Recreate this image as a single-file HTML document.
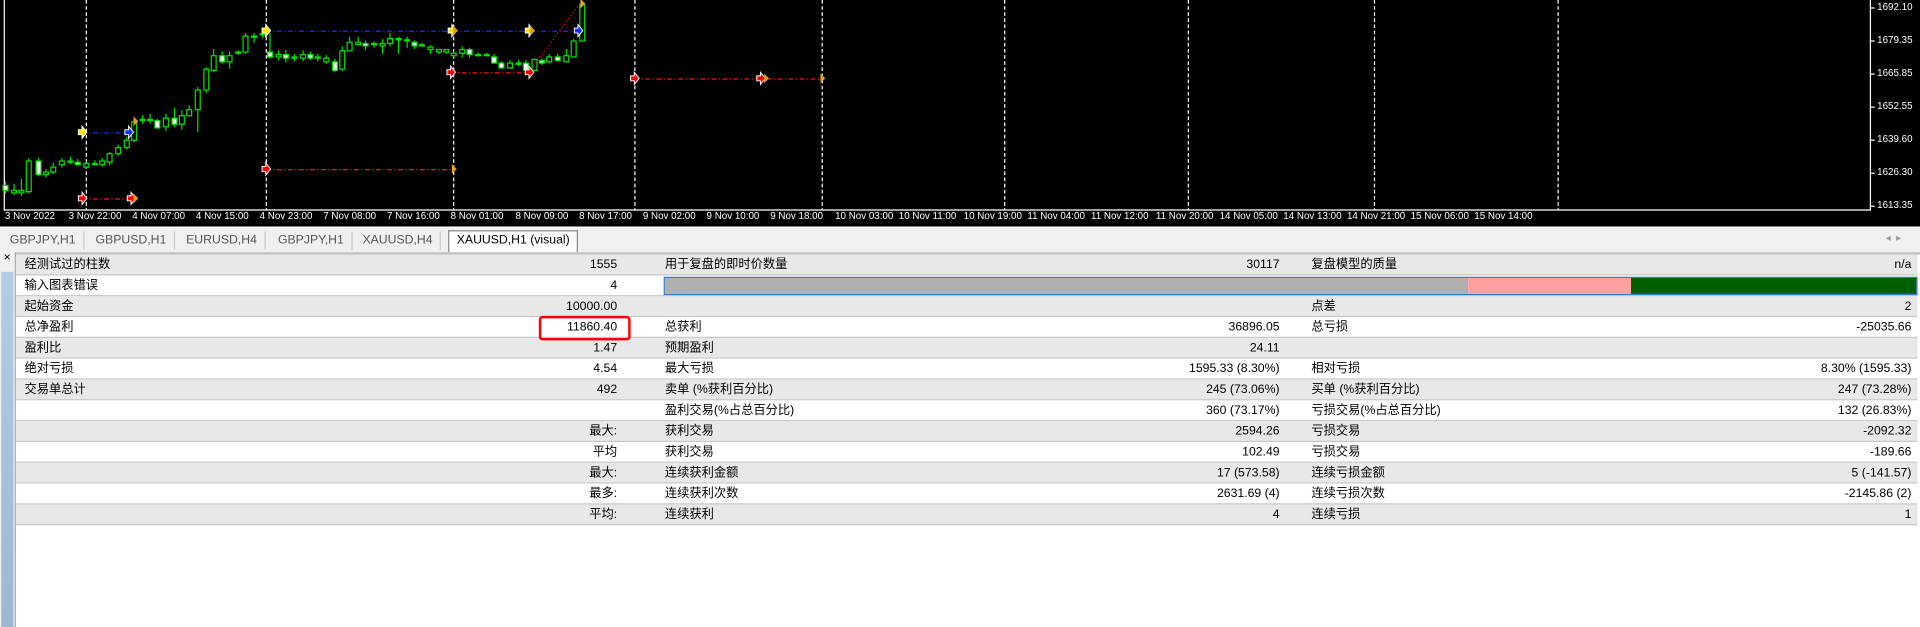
<!DOCTYPE html>
<html><head><meta charset="utf-8"><style>
html,body{margin:0;padding:0;width:1920px;height:627px;overflow:hidden;background:#fff}
#w{position:absolute;left:0;top:0;width:1568px;height:512px;transform:scale(1.22449);transform-origin:0 0;font-family:"Liberation Sans","Noto Sans CJK SC",sans-serif;}
.chart{position:absolute;left:0;top:0;width:1568px;height:185px;background:#000}
.tl{position:absolute;top:172px;color:#fff;font-size:8px;white-space:nowrap}
.pl{position:absolute;left:1533px;color:#fff;font-size:8px}
.tabs{position:absolute;left:0;top:185px;width:1568px;height:20px;background:#f0f0f0;border-top:1px solid #fff}
.tab{position:absolute;top:3px;height:15px;font-size:10px;color:#555;line-height:15px;border-right:1px solid #c8c8c8;padding:0 6px}
.tab.act{background:#fff;color:#000;border:1px solid #888;border-bottom:none;top:2px;height:17px}
.row{position:absolute;left:13px;width:1553px;height:16px;border-bottom:1px solid #c8c8c8;font-size:10px;line-height:17px;color:#000}
.g{background:#e8e8e8}.w{background:#fff}
.row span{position:absolute;white-space:nowrap}
.r1{right:1062px;text-align:right}.l2{left:530px}.r2{right:521px}.l3{left:1058px}.r3{right:5px}
</style></head><body><div id="w">
<div class="chart">
<svg width="1568" height="185" style="position:absolute;left:0;top:0">
<g stroke="#fff" stroke-width="1" stroke-dasharray="3,2">
<line x1="70.5" y1="0" x2="70.5" y2="171"/><line x1="217.5" y1="0" x2="217.5" y2="171"/><line x1="370.5" y1="0" x2="370.5" y2="171"/><line x1="518.5" y1="0" x2="518.5" y2="171"/><line x1="671.5" y1="0" x2="671.5" y2="171"/><line x1="820.5" y1="0" x2="820.5" y2="171"/><line x1="970.5" y1="0" x2="970.5" y2="171"/><line x1="1122.5" y1="0" x2="1122.5" y2="171"/><line x1="1272.5" y1="0" x2="1272.5" y2="171"/>
</g>
<g stroke="#fff"><line x1="3.5" y1="0" x2="3.5" y2="172"/><line x1="3" y1="171.5" x2="1528" y2="171.5"/><line x1="1527.5" y1="0" x2="1527.5" y2="172"/>
<line x1="1527" y1="6.5" x2="1531" y2="6.5"/><line x1="1527" y1="33.5" x2="1531" y2="33.5"/><line x1="1527" y1="60.5" x2="1531" y2="60.5"/><line x1="1527" y1="87.5" x2="1531" y2="87.5"/><line x1="1527" y1="114.5" x2="1531" y2="114.5"/><line x1="1527" y1="141.5" x2="1531" y2="141.5"/><line x1="1527" y1="168.5" x2="1531" y2="168.5"/></g>
<g stroke="#00e000" stroke-width="1" fill="#000">
<path d="M4.5 148V158M11.5 150V159M17.5 146V160M23.5 129V158M31.5 129V144M37.5 138V145M43.5 133V142M50.5 129V137M57.5 128V134M63.5 130V135M70.5 132V138M77.5 131V135M83.5 129V136M89.5 124V135M96.5 118V127M103.5 112V122M109.5 97V116M116.5 94V101M122.5 93V101M128.5 97V105M135.5 93V107M142.5 88V104M148.5 90V106M154.5 86V95M161.5 71V108M168.5 55V76M174.5 40V59M181.5 42V52M187.5 42V56M194.5 41V45M200.5 27V44M207.5 27V35M214.5 25V31M220.5 27V48M227.5 41V49M233.5 41V51M240.5 44V50M247.5 41V50M253.5 42V49M259.5 44V50M266.5 45V52M273.5 48V59M279.5 38V58M285.5 30V42M292.5 30V37M298.5 33V41M305.5 34V39M312.5 32V44M318.5 27V38M325.5 30V44M332.5 30V39M338.5 33V40M344.5 35V38M351.5 37V44M358.5 40V44M364.5 40V44M370.5 42V47M377.5 38V47M383.5 39V47M390.5 43V46M397.5 43V46M403.5 44V52M409.5 50V56M416.5 49V56M423.5 49V54M429.5 49V58M436.5 48V57M442.5 48V53M448.5 44V52M455.5 44V50M462.5 40V51M468.5 32V47M475.5 2V34"/>
<rect x="2.5" y="151.5" width="4" height="4" fill="#fff"/><rect x="9.5" y="155.5" width="4" height="2"/><rect x="15.5" y="155.5" width="4" height="2"/><rect x="21.5" y="131.5" width="4" height="25"/><rect x="29.5" y="131.5" width="4" height="11" fill="#fff"/><rect x="35.5" y="140.5" width="4" height="2"/><rect x="41.5" y="136.5" width="4" height="4"/><rect x="48.5" y="131.5" width="4" height="3"/><rect x="55.5" y="131.5" width="4" height="1"/><rect x="61.5" y="132.5" width="4" height="2" fill="#fff"/><rect x="68.5" y="133.5" width="4" height="3"/><rect x="75.5" y="133.5" width="4" height="1"/><rect x="81.5" y="131.5" width="4" height="3"/><rect x="87.5" y="125.5" width="4" height="7"/><rect x="94.5" y="120.5" width="4" height="5"/><rect x="101.5" y="114.5" width="4" height="6"/><rect x="107.5" y="99.5" width="4" height="15"/><rect x="114.5" y="97.5" width="4" height="1"/><rect x="120.5" y="97.5" width="4" height="1"/><rect x="126.5" y="98.5" width="4" height="6" fill="#fff"/><rect x="133.5" y="96.5" width="4" height="7"/><rect x="140.5" y="96.5" width="4" height="5" fill="#fff"/><rect x="146.5" y="94.5" width="4" height="7"/><rect x="152.5" y="89.5" width="4" height="5"/><rect x="159.5" y="73.5" width="4" height="16"/><rect x="166.5" y="56.5" width="4" height="17"/><rect x="172.5" y="45.5" width="4" height="12"/><rect x="179.5" y="45.5" width="4" height="5" fill="#fff"/><rect x="185.5" y="45.5" width="4" height="5"/><rect x="192.5" y="42.5" width="4" height="1"/><rect x="198.5" y="29.5" width="4" height="13"/><rect x="205.5" y="29.5" width="4" height="1"/><rect x="212.5" y="27.5" width="4" height="1"/><rect x="218.5" y="42.5" width="4" height="4" fill="#fff"/><rect x="225.5" y="44.5" width="4" height="2"/><rect x="231.5" y="44.5" width="4" height="3" fill="#fff"/><rect x="238.5" y="46.5" width="4" height="1"/><rect x="245.5" y="44.5" width="4" height="3"/><rect x="251.5" y="44.5" width="4" height="3" fill="#fff"/><rect x="257.5" y="46.5" width="4" height="1"/><rect x="264.5" y="47.5" width="4" height="3"/><rect x="271.5" y="50.5" width="4" height="7" fill="#fff"/><rect x="277.5" y="41.5" width="4" height="15"/><rect x="283.5" y="34.5" width="4" height="7"/><rect x="290.5" y="34.5" width="4" height="2"/><rect x="296.5" y="35.5" width="4" height="2" fill="#fff"/><rect x="303.5" y="35.5" width="4" height="1"/><rect x="310.5" y="35.5" width="4" height="2"/><rect x="316.5" y="31.5" width="4" height="4"/><rect x="323.5" y="31.5" width="4" height="1" fill="#fff"/><rect x="330.5" y="32.5" width="4" height="1"/><rect x="336.5" y="34.5" width="4" height="3" fill="#fff"/><rect x="342.5" y="36.5" width="4" height="1"/><rect x="349.5" y="38.5" width="4" height="2"/><rect x="356.5" y="40.5" width="4" height="2"/><rect x="362.5" y="40.5" width="4" height="2"/><rect x="368.5" y="43.5" width="4" height="2"/><rect x="375.5" y="40.5" width="4" height="3"/><rect x="381.5" y="40.5" width="4" height="4" fill="#fff"/><rect x="388.5" y="44.5" width="4" height="1"/><rect x="395.5" y="44.5" width="4" height="1"/><rect x="401.5" y="46.5" width="4" height="5" fill="#fff"/><rect x="407.5" y="51.5" width="4" height="4" fill="#fff"/><rect x="414.5" y="51.5" width="4" height="4"/><rect x="421.5" y="51.5" width="4" height="1"/><rect x="427.5" y="51.5" width="4" height="6" fill="#fff"/><rect x="434.5" y="48.5" width="4" height="9"/><rect x="440.5" y="49.5" width="4" height="2" fill="#fff"/><rect x="446.5" y="46.5" width="4" height="4"/><rect x="453.5" y="46.5" width="4" height="3" fill="#fff"/><rect x="460.5" y="45.5" width="4" height="5"/><rect x="466.5" y="33.5" width="4" height="13"/><rect x="473.5" y="3.5" width="4" height="30"/>
</g>
<g stroke-width="1" stroke-dasharray="4,2,1,2">
<line x1="67" y1="108.5" x2="105" y2="108.5" stroke="#1030ff"/>
<line x1="217" y1="25.5" x2="472" y2="25.5" stroke="#1030ff"/>
<line x1="67" y1="162.5" x2="108" y2="162.5" stroke="#ff1010"/>
<line x1="217" y1="138.5" x2="370" y2="138.5" stroke="#ff1010"/>
<line x1="368" y1="59.5" x2="432" y2="59.5" stroke="#ff1010"/>
<line x1="518" y1="64.5" x2="671" y2="64.5" stroke="#ff1010"/>
</g>
<line x1="432" y1="59" x2="472" y2="5" stroke="#ff1010" stroke-dasharray="1,2"/>
<g stroke="#fff" stroke-width="0.8">
<path d="M64 106h3v-3l4 5-4 5v-3h-3z" fill="#ffe000"/><path d="M214 23h3v-3l4 5-4 5v-3h-3z" fill="#ffe000"/><path d="M366 23h3v-3l4 5-4 5v-3h-3z" fill="#ffe000"/><path d="M429 23h3v-3l4 5-4 5v-3h-3z" fill="#ffe000"/>
<path d="M102 106h3v-3l4 5-4 5v-3h-3z" fill="#1030ff"/><path d="M469 23h3v-3l4 5-4 5v-3h-3z" fill="#1030ff"/>
<path d="M64 160h3v-3l4 5-4 5v-3h-3z" fill="#f00"/><path d="M104 160h3v-3l4 5-4 5v-3h-3z" fill="#f00"/><path d="M214 136h3v-3l4 5-4 5v-3h-3z" fill="#f00"/><path d="M365 57h3v-3l4 5-4 5v-3h-3z" fill="#f00"/><path d="M429 57h3v-3l4 5-4 5v-3h-3z" fill="#f00"/><path d="M515 62h3v-3l4 5-4 5v-3h-3z" fill="#f00"/><path d="M618 62h3v-3l4 5-4 5v-3h-3z" fill="#f00"/>
</g>
<g fill="#e0a020">
<path d="M113 99l-4-4v8z"/><path d="M113 162l-4-4v8z"/><path d="M373 138l-4-4v8z"/><path d="M374 25l-4-4v8z"/><path d="M437 25l-4-4v8z"/><path d="M478 3l-4-4v8z"/><path d="M628 64l-4-4v8z"/><path d="M674 64l-4-4v8z"/>
</g>
</svg>
<div class="pl" style="top:1px">1692.10</div><div class="pl" style="top:28px">1679.35</div><div class="pl" style="top:55px">1665.85</div><div class="pl" style="top:82px">1652.55</div><div class="pl" style="top:109px">1639.60</div><div class="pl" style="top:136px">1626.30</div><div class="pl" style="top:163px">1613.35</div>
<div class="tl" style="left:4px">3 Nov 2022</div><div class="tl" style="left:56px">3 Nov 22:00</div><div class="tl" style="left:108px">4 Nov 07:00</div><div class="tl" style="left:160px">4 Nov 15:00</div><div class="tl" style="left:212px">4 Nov 23:00</div><div class="tl" style="left:264px">7 Nov 08:00</div><div class="tl" style="left:316px">7 Nov 16:00</div><div class="tl" style="left:368px">8 Nov 01:00</div><div class="tl" style="left:421px">8 Nov 09:00</div><div class="tl" style="left:473px">8 Nov 17:00</div><div class="tl" style="left:525px">9 Nov 02:00</div><div class="tl" style="left:577px">9 Nov 10:00</div><div class="tl" style="left:629px">9 Nov 18:00</div><div class="tl" style="left:682px">10 Nov 03:00</div><div class="tl" style="left:734px">10 Nov 11:00</div><div class="tl" style="left:787px">10 Nov 19:00</div><div class="tl" style="left:839px">11 Nov 04:00</div><div class="tl" style="left:891px">11 Nov 12:00</div><div class="tl" style="left:944px">11 Nov 20:00</div><div class="tl" style="left:996px">14 Nov 05:00</div><div class="tl" style="left:1048px">14 Nov 13:00</div><div class="tl" style="left:1100px">14 Nov 21:00</div><div class="tl" style="left:1152px">15 Nov 06:00</div><div class="tl" style="left:1204px">15 Nov 14:00</div>
</div>
<div class="tabs">
<div class="tab" style="left:2px">GBPJPY,H1</div><div class="tab" style="left:72px">GBPUSD,H1</div><div class="tab" style="left:146px">EURUSD,H4</div><div class="tab" style="left:221px">GBPJPY,H1</div><div class="tab" style="left:290px">XAUUSD,H4</div><div class="tab act" style="left:366px">XAUUSD,H1 (visual)</div>
<div style="position:absolute;left:1540px;top:4px;font-size:8px;color:#999">◂ &nbsp;▸</div>
</div>
<div style="position:absolute;left:0;top:206px;width:13px;height:306px;background:#f0f0f0"></div>
<div style="position:absolute;left:3px;top:205px;font-size:10px">×</div>
<div style="position:absolute;left:1px;top:222px;width:10px;height:290px;background:linear-gradient(#b4cde6,#9cb6d4)"></div>
<div style="position:absolute;left:12px;top:206px;width:1px;height:306px;background:#a8a8a8"></div>
<div style="position:absolute;left:13px;top:206px;width:1555px;height:2px;background:#c0c0c0"></div>
<div class="row g" style="top:208px"><span style="left:7px">经测试过的柱数</span><span class="r1">1555</span><span class="l2">用于复盘的即时价数量</span><span class="r2">30117</span><span class="l3">复盘模型的质量</span><span class="r3">n/a</span></div>
<div class="row w" style="top:225px"><span style="left:7px">输入图表错误</span><span class="r1">4</span>
<div style="position:absolute;left:529px;top:1px;width:1022px;height:13px;border:1px solid #2a7ad0;display:flex"><div style="width:656px;background:#b0b0b0"></div><div style="width:133px;background:#ffa0a0"></div><div style="flex:1;background:#006000"></div></div></div>
<div class="row g" style="top:242px"><span style="left:7px">起始资金</span><span class="r1">10000.00</span><span class="l3">点差</span><span class="r3">2</span></div>
<div class="row w" style="top:259px"><span style="left:7px">总净盈利</span><span class="r1">11860.40</span><span class="l2">总获利</span><span class="r2">36896.05</span><span class="l3">总亏损</span><span class="r3">-25035.66</span></div>
<div class="row g" style="top:276px"><span style="left:7px">盈利比</span><span class="r1">1.47</span><span class="l2">预期盈利</span><span class="r2">24.11</span></div>
<div class="row w" style="top:293px"><span style="left:7px">绝对亏损</span><span class="r1">4.54</span><span class="l2">最大亏损</span><span class="r2">1595.33 (8.30%)</span><span class="l3">相对亏损</span><span class="r3">8.30% (1595.33)</span></div>
<div class="row g" style="top:310px"><span style="left:7px">交易单总计</span><span class="r1">492</span><span class="l2">卖单 (%获利百分比)</span><span class="r2">245 (73.06%)</span><span class="l3">买单 (%获利百分比)</span><span class="r3">247 (73.28%)</span></div>
<div class="row w" style="top:327px"><span class="l2">盈利交易(%占总百分比)</span><span class="r2">360 (73.17%)</span><span class="l3">亏损交易(%占总百分比)</span><span class="r3">132 (26.83%)</span></div>
<div class="row g" style="top:344px"><span class="r1">最大:</span><span class="l2">获利交易</span><span class="r2">2594.26</span><span class="l3">亏损交易</span><span class="r3">-2092.32</span></div>
<div class="row w" style="top:361px"><span class="r1">平均</span><span class="l2">获利交易</span><span class="r2">102.49</span><span class="l3">亏损交易</span><span class="r3">-189.66</span></div>
<div class="row g" style="top:378px"><span class="r1">最大:</span><span class="l2">连续获利金额</span><span class="r2">17 (573.58)</span><span class="l3">连续亏损金额</span><span class="r3">5 (-141.57)</span></div>
<div class="row w" style="top:395px"><span class="r1">最多:</span><span class="l2">连续获利次数</span><span class="r2">2631.69 (4)</span><span class="l3">连续亏损次数</span><span class="r3">-2145.86 (2)</span></div>
<div class="row g" style="top:412px"><span class="r1">平均:</span><span class="l2">连续获利</span><span class="r2">4</span><span class="l3">连续亏损</span><span class="r3">1</span></div>
<div style="position:absolute;left:440px;top:258px;width:71px;height:16px;border:2px solid #f00;border-radius:3px"></div>
</div></body></html>
